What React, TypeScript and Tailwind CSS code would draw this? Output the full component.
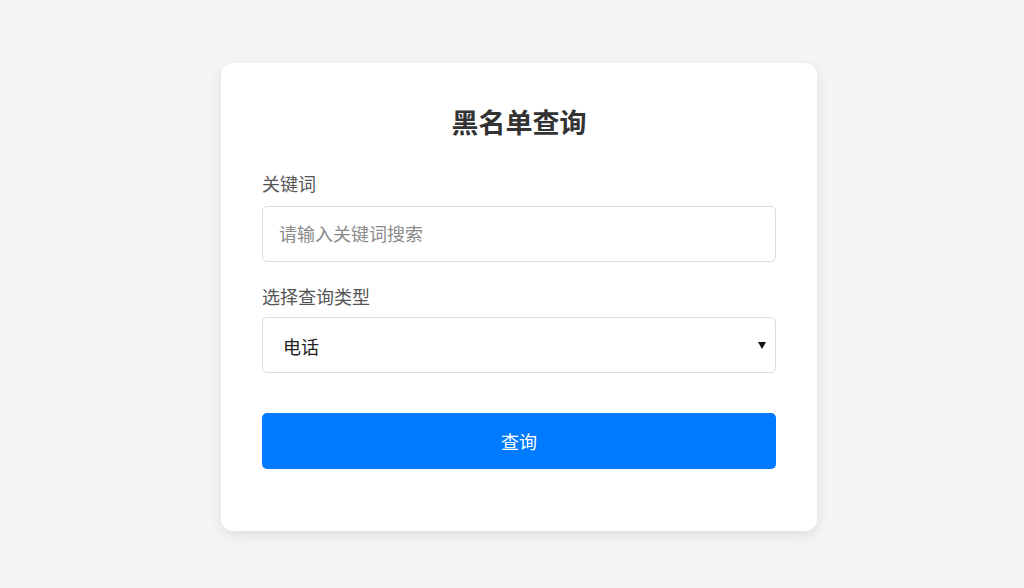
import React from "react";

export default function App() {
  return (
    <div
      className="w-[1024px] h-[588px] bg-[#f5f5f5] pt-[63px] pl-[221px]"
      style={{ fontFamily: '"Noto Sans CJK SC", "Noto Sans", sans-serif' }}
    >
      <div className="w-[596px] h-[468px] bg-white rounded-[12px] shadow-[0_4px_14px_rgba(0,0,0,0.1)] px-[41px] pt-[41px]">
        <h1 className="text-[27px] leading-[36px] font-bold text-[#333] text-center">黑名单查询</h1>
        <div className="mt-[30px]">
          <label className="block text-[18px] leading-[26px] text-[#555] mb-[10px]">关键词</label>
          <input
            type="text"
            placeholder="请输入关键词搜索"
            className="block w-full h-[56px] border border-[#ddd] rounded-[5px] pl-[16px] pr-[16px] pb-[3px] text-[18px] text-[#222] placeholder:text-[#8a8a8a] outline-none"
          />
        </div>
        <div className="mt-[21px]">
          <label className="block text-[18px] leading-[26px] text-[#555] mb-[8px]">选择查询类型</label>
          <div className="relative">
            <select
              className="block w-full h-[56px] border border-[#ddd] rounded-[5px] pl-[20px] pr-[30px] pt-[2px] text-[18px] text-[#222] bg-white appearance-none outline-none"
              defaultValue="phone"
            >
              <option value="phone">电话</option>
            </select>
            <svg
              className="absolute right-[10px] top-[25px] pointer-events-none"
              width="8"
              height="7"
              viewBox="0 0 8 7"
            >
              <path d="M0 0 L8 0 L4 7 Z" fill="#111" />
            </svg>
          </div>
        </div>
        <button className="mt-[40px] w-full h-[56px] bg-[#007bff] rounded-[5px] text-white text-[18px]">
          查询
        </button>
      </div>
    </div>
  );
}
